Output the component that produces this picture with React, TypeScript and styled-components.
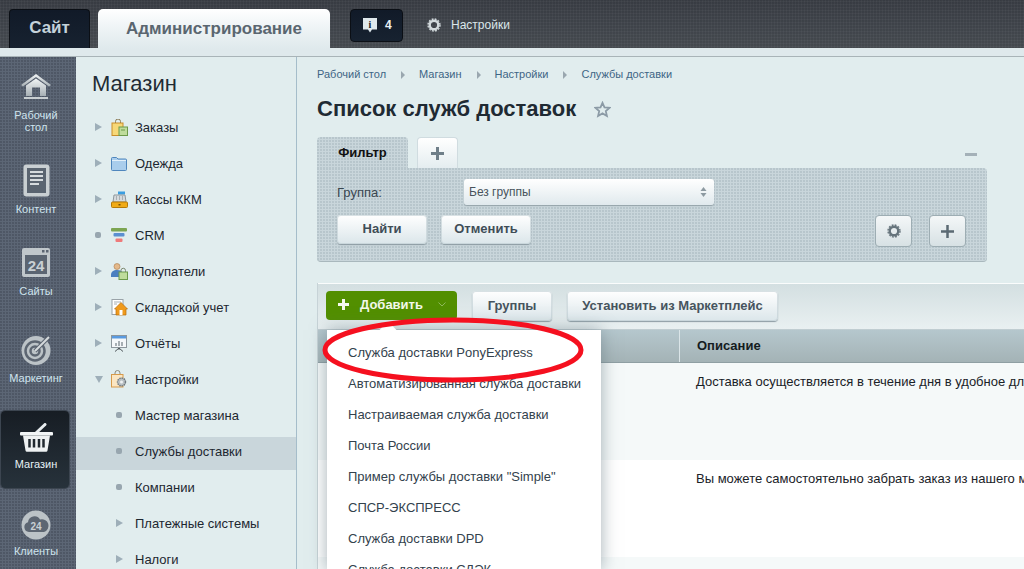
import React from "react";
import styled, { createGlobalStyle } from "styled-components";

const Global = createGlobalStyle`
  html, body { margin: 0; padding: 0; background: #e1edee; }
  body { font-family: "Liberation Sans", Arial, sans-serif; overflow: hidden; }
  * { box-sizing: border-box; }
`;

const Page = styled.div`
  width: 1024px; height: 569px; overflow: hidden; display: flex; flex-direction: column; position: relative;
`;
const TopBar = styled.header`
  height: 57px; flex: none; padding: 9px 0 0 9px; display: flex; align-items: flex-start;
  border-bottom: 1px solid #a9b4b8;
  background:
    linear-gradient(#dfe9ec, #dfe9ec) left bottom / 100% 8px no-repeat,
    repeating-linear-gradient(0deg, rgba(255,255,255,.025) 0 1px, rgba(0,0,0,.03) 1px 3px),
    repeating-linear-gradient(90deg, rgba(255,255,255,.025) 0 1px, rgba(0,0,0,.03) 1px 3px),
    linear-gradient(#3b3f46, #4b5056);
`;
const SiteTab = styled.div`
  width: 81px; height: 39px; margin-right: 8px; border-radius: 4px 4px 0 0; background: linear-gradient(#111a28, #172230);
  border: 1px solid #0b0f15; border-bottom: 0; color: #c4d2da; font-size: 17px; font-weight: bold;
  display: flex; align-items: center; justify-content: center; padding-bottom: 2px;
`;
const AdminTab = styled.div`
  width: 232px; height: 47px; border-radius: 5px 5px 0 0; background: linear-gradient(#fff, #f0f5f7 35%, #dfe9ec 85%);
  color: #5a6670; font-size: 17px; font-weight: bold; display: flex; align-items: flex-start; justify-content: center; padding-top: 10px; margin-right: 20px;
`;
const NotifyButton = styled.div`
  width: 53px; height: 33px; border-radius: 4px; background: linear-gradient(#111a28, #172230); border: 1px solid #0b0f15;
  color: #e8eff2; font-size: 12px; font-weight: bold; display: flex; align-items: center; gap: 8px; padding: 0 0 1px 12px; margin-right: 24px;
`;
const TopSettings = styled.div`
  height: 31px; display: flex; align-items: center; gap: 10px; color: #dbe6ea; font-size: 12px;
`;
const Body = styled.div`
  flex: 1; display: flex; min-height: 0;
`;
const LeftNav = styled.nav`
  width: 76px; flex: none; padding: 3px 0 0 1px; overflow: hidden; background-color: #5c6675;
  background-image: radial-gradient(circle at 1px 1px, rgba(35,42,52,.25) .7px, transparent 1px);
  background-size: 3px 3px;
`;
const NavItem = styled.div<{ $active?: boolean; $gap: number }>`
  width: 68px; height: 77px; padding-top: 9px; margin-bottom: ${p => p.$gap}px; border-radius: 4px;
  display: flex; flex-direction: column; align-items: center;
  ${p => p.$active ? "background: linear-gradient(#171d24, #27323b); box-shadow: 0 0 0 1px #3c4550;" : ""}
`;
const NavIcon = styled.div`
  width: 68px; height: 34px; flex: none; padding-left: 2px; display: flex; align-items: center; justify-content: center;
`;
const NavLabel = styled.div<{ $gap: number; $active?: boolean }>`
  margin-top: ${p => p.$gap}px; padding-left: 2px; font-size: 11px; line-height: 12px; text-align: center;
  color: ${p => p.$active ? "#e6f1f5" : "#cfe4ee"}; white-space: pre-line;
`;
const MenuPanel = styled.aside`
  width: 221px; flex: none; overflow: hidden; border-right: 1px solid #a5bdca; background: #e1edee; 
`;
const MenuTitle = styled.h2`
  margin: 15px 0 17px 16px; height: 24px; font-size: 22px; line-height: 24px; font-weight: normal; color: #1f2b34;
`;
const MenuRow = styled.div<{ $selected?: boolean }>`
  height: 33px; margin-bottom: 3px; padding: 0 0 5px 19px; display: flex; align-items: center; font-size: 13px; color: #1d2730; white-space: nowrap;
  background: ${p => p.$selected ? "#c9d6db" : "transparent"};
`;
const MarkerSlot = styled.div<{ $sub?: boolean }>`
  flex: none; width: ${p => p.$sub ? 40 : 16}px; padding-left: ${p => p.$sub ? 21 : 0}px; display: flex; align-items: center;
`;
const ArrowRight = styled.i`
  width: 0; height: 0; border-style: solid; border-width: 4px 0 4px 7px; border-color: transparent transparent transparent #9eafb9;
`;
const ArrowDown = styled.i`
  width: 0; height: 0; border-style: solid; border-width: 7px 4.5px 0 4.5px; border-color: #9eafb9 transparent transparent transparent;
`;
const Bullet = styled.i`
  width: 6px; height: 6px; border-radius: 2px; background: #98a6af;
`;
const IconSlot = styled.div`
  flex: none; width: 24px; height: 20px; display: flex; align-items: center;
`;
const Content = styled.main`
  flex: 1; min-width: 0; padding: 0 0 0 20px; background: #e1edee; overflow: hidden;
`;
const Crumbs = styled.div`
  height: 13px; margin-top: 11px; display: flex; align-items: center; font-size: 11px; line-height: 13px; color: #3e6585;
`;
const CrumbArrow = styled.i`
  width: 0; height: 0; margin: 0 14px 0 15px; border-style: solid; border-width: 4px 0 4px 4px; border-color: transparent transparent transparent #9aa7af;
`;
const TitleRow = styled.div`
  margin-top: 15px; height: 26px; display: flex; align-items: center; gap: 18px;
`;
const Title = styled.h1`
  margin: 0; font-size: 22px; line-height: 26px; font-weight: bold; color: #1f2a33;
`;
const FilterHead = styled.div`
  width: 670px; height: 31px; margin-top: 15px; display: flex; align-items: stretch; position: relative;
`;
const dots = `
  background-color: #c9d6db;
  background-image: radial-gradient(circle at 1px 1px, rgba(120,140,150,.22) .7px, transparent 1px);
  background-size: 3px 3px;
`;
const FilterTab = styled.div`
  width: 91px; border-radius: 4px 4px 0 0; ${dots}; font-size: 13px; font-weight: bold; color: #111; display: flex; align-items: center; justify-content: center; margin-right: 9px;
`;
const PlusTab = styled.div`
  width: 41px; border-radius: 4px 4px 0 0; background: linear-gradient(#fff, #e4edf0); border: 1px solid #d0dce0; border-bottom: 0;
  display: flex; align-items: center; justify-content: center;
`;
const Collapse = styled.i`
  position: absolute; right: 10px; top: 16px; width: 12px; height: 3px; background: #a4b1b8;
`;
const FilterPanel = styled.section`
  width: 670px; height: 94px; border-radius: 0 4px 4px 4px; ${dots}; border-bottom: 1px solid #a9b8bd; padding: 11px 21px 0 20px;
`;
const FieldRow = styled.div`
  height: 26px; display: flex; align-items: center; font-size: 13px; color: #3a4750;
`;
const FieldLabel = styled.label`
  width: 127px; flex: none;
`;
const SelectBox = styled.div`
  width: 250px; height: 26px; border-radius: 3px; background: linear-gradient(#fff, #e0e9ed); box-shadow: 0 1px 1px #95a4aa;
  padding: 0 7px 0 5px; display: flex; align-items: center; justify-content: space-between; font-size: 12px; color: #48535c;
`;
const FilterActions = styled.div`
  margin-top: 10px; display: flex; align-items: flex-start;
`;
const Btn = styled.button<{ $w: number }>`
  width: ${p => p.$w}px; height: 29px; padding: 0 0 2px; border: 0; border-radius: 4px; background: linear-gradient(#fff, #dbe6ea);
  box-shadow: 0 1px 1px #8d9ca3, 0 0 0 1px rgba(190,205,210,.6) inset; font: bold 13px "Liberation Sans", Arial, sans-serif; color: #3f4d57; margin-right: 14px;
`;
const Spacer = styled.div`
  flex: 1;
`;
const IconBtn = styled.button`
  width: 37px; height: 32px; padding: 0; border: 1px solid #9dadb3; border-radius: 4px; background: linear-gradient(#f4f7f8, #d7e1e4);
  display: flex; align-items: center; justify-content: center; margin-left: 17px;
`;
const Grid = styled.section`
  margin-top: 21px; width: 727px; border-left: 1px solid #c7d3d7; position: relative;
`;
const Toolbar = styled.div`
  height: 47px; padding: 7px 0 0 8px; display: flex; align-items: flex-start; border-top: 1px solid #fafcfc; border-bottom: 1px solid #c0cdd1;
  background: linear-gradient(#d3dfe1, #e9f0f1);
`;
const AddBtn = styled.div`
  width: 131px; height: 29px; margin-right: 15px; padding: 0 0 2px 12px; border-radius: 4px; background: #528f00; color: #f3f8ea; font-size: 13px; font-weight: bold;
  display: flex; align-items: center; gap: 11px;
`;
const AddChevron = styled.svg`
  margin-left: 4px;
`;
const ToolBtn = styled(Btn)`
  margin-right: 15px; height: 30px; color: #47545e;
`;
const TableHead = styled.div`
  height: 33px; display: flex; font-size: 13px; font-weight: bold; color: #141c21; border-bottom: 1px solid #8f9fa3;
  background: linear-gradient(#b5c7cd, #a4b3b6);
`;
const HeadSpacer = styled.div`
  width: 362px; flex: none; border-right: 1px solid #dbe5e8;
`;
const HeadCell = styled.div`
  padding: 0 0 2px 17px; display: flex; align-items: center;
`;
const TableRow = styled.div<{ $alt?: boolean }>`
  height: 97px; padding: 11px 0 0 378px; background: ${p => p.$alt ? "#f5f9f9" : "#fff"}; font-size: 13px; line-height: 15px; color: #1a2227; white-space: nowrap; overflow: hidden;
`;
const Dropdown = styled.div`
  position: absolute; left: 9px; top: 47px; width: 274px; height: 240px; background: #fff; box-shadow: 0 0 16px rgba(90,110,120,.55); padding: 7px 0 0 21px;
  &::before { content: ""; position: absolute; left: 55px; top: -6px; width: 12px; height: 12px; background: #fff; transform: rotate(45deg); }
`;
const DropItem = styled.div`
  height: 31px; display: flex; align-items: center; font-size: 13px; color: #33424d; white-space: nowrap; position: relative;
`;
const Annotation = styled.svg`
  position: absolute; left: 318px; top: 312px; pointer-events: none;
`;

const HomeIcon = () => (
  <svg width="30" height="28" viewBox="0 0 30 28">
    <defs><linearGradient id="g1" x1="0" y1="0" x2="0" y2="1"><stop offset="0" stopColor="#f2f5f6" /><stop offset="1" stopColor="#a6afb4" /></linearGradient></defs>
    <path d="M0 13 15 2l15 11-2 1.500L15 5 2 14.500Z" fill="url(#g1)" />
    <path d="M5 13.500 15 6.500l10 7V24H19V15.500h-8V24H5Z" fill="url(#g1)" />
    <path d="M3 25h24v2H3Z" fill="#c8ced1" />
  </svg>
);
const DocIcon = () => (
  <svg width="27" height="33" viewBox="0 0 27 33">
    <rect x="0.500" y="0.500" width="26" height="32" rx="3" fill="#c9cfd2" />
    <rect x="4" y="4" width="19" height="25" fill="#5a6470" />
    <path d="M7 8h13M7 12h13M7 16h13M7 20h9" stroke="#d6dbde" strokeWidth="2" />
  </svg>
);
const CalIcon = () => (
  <svg width="30" height="30" viewBox="0 0 30 30">
    <rect x="1" y="0" width="28" height="29" rx="2" fill="#c0c7cb" />
    <rect x="4" y="7" width="22" height="19" fill="#5b6572" />
    <rect x="21" y="2" width="2.500" height="2.500" fill="#5b6572" /><rect x="25" y="2" width="2.500" height="2.500" fill="#5b6572" />
    <text x="15" y="23" textAnchor="middle" fontFamily="Liberation Sans" fontWeight="bold" fontSize="15" fill="#c9d0d4">24</text>
  </svg>
);
const TargetIcon = () => (
  <svg width="30" height="30" viewBox="0 0 30 30">
    <circle cx="15" cy="15.500" r="14.500" fill="#bcc3c7" />
    <circle cx="14" cy="16" r="9.500" fill="none" stroke="#5d6672" strokeWidth="2.500" />
    <circle cx="14" cy="16" r="4.500" fill="none" stroke="#5d6672" strokeWidth="2.500" />
    <path d="M14 16 27 3" stroke="#5d6672" strokeWidth="4" />
    <path d="M14 16 28 2" stroke="#d5dadc" strokeWidth="2" />
  </svg>
);
const BasketIcon = () => (
  <svg width="33" height="29" viewBox="0 0 33 29">
    <path d="M16 10 25 1.500" stroke="#e9eef0" strokeWidth="3" strokeLinecap="round" />
    <rect x="0" y="9" width="33" height="3.500" rx="1" fill="#f2f5f6" />
    <path d="M3 12.500h27l-2.500 15a1.500 1.500 0 0 1-1.500 1.300H7a1.500 1.500 0 0 1-1.500-1.300Z" fill="#eef1f2" />
    <path d="M9.500 16v8.500M14 16v8.500M19 16v8.500M23.500 16v8.500" stroke="#20282f" strokeWidth="2.500" />
  </svg>
);
const CloudIcon = () => (
  <svg width="30" height="30" viewBox="0 0 30 30">
    <circle cx="15" cy="15" r="14.500" fill="#bcc3c7" />
    <path d="M8 22a5 5 0 0 1-1-9.800A6.500 6.500 0 0 1 19 9.500 5.500 5.500 0 0 1 23 22Z" fill="#5d6672" />
    <text x="15" y="19.500" textAnchor="middle" fontFamily="Liberation Sans" fontWeight="bold" fontSize="10" fill="#c9d0d4">24</text>
  </svg>
);

const BagIcon = () => (
  <svg width="17" height="17" viewBox="0 0 17 17">
    <path d="M4.500 4V2.500a2.500 2.500 0 0 1 5 0V4" fill="none" stroke="#8a7a55" />
    <rect x="1" y="4" width="11" height="12.500" fill="#f7d878" stroke="#c98d2a" />
    <rect x="8" y="8" width="8.500" height="8.500" fill="#bfdc9c" stroke="#6c9a4a" />
    <path d="M10 11h4" stroke="#6c9a4a" />
  </svg>
);
const FolderIcon = () => (
  <svg width="16" height="15" viewBox="0 0 16 15">
    <path d="M.5 2.500a1 1 0 0 1 1-1h4l1.500 1.500h7.500a1 1 0 0 1 1 1v9.500a1 1 0 0 1-1 1h-13a1 1 0 0 1-1-1Z" fill="#a9cdec" stroke="#4f86bd" />
    <path d="M1 4.500h14" stroke="#e3f0fa" />
  </svg>
);
const CashIcon = () => (
  <svg width="17" height="17" viewBox="0 0 17 17">
    <rect x="7" y="0.500" width="7" height="3" fill="#3b9ee0" />
    <path d="M3 4h11l1 7H2Z" fill="#d6dadc" stroke="#8f979c" />
    <path d="M5 6h1M8 6h1M11 6h1M5 8h1M8 8h1M11 8h1" stroke="#7c858a" />
    <rect x="0.500" y="11" width="16" height="5.500" rx="1" fill="#f0ab17" stroke="#b57a08" />
    <rect x="7.500" y="13" width="2" height="1.500" fill="#7a5205" />
  </svg>
);
const FunnelIcon = () => (
  <svg width="16" height="15" viewBox="0 0 16 15">
    <rect x="0" y="0" width="16" height="3.500" rx="1" fill="#7ca552" />
    <rect x="2.500" y="5" width="11" height="3.500" rx="1" fill="#5b8fd0" />
    <rect x="4.500" y="10.500" width="7" height="3.500" rx="1" fill="#ef7a7a" />
  </svg>
);
const UsersIcon = () => (
  <svg width="17" height="17" viewBox="0 0 17 17">
    <circle cx="6" cy="3.500" r="3" fill="#e4b98b" stroke="#a9794a" strokeWidth=".6" />
    <path d="M0 12c0-3.500 2.500-5 6-5s5 1 5.500 3L8 14H0Z" fill="#4a7fc0" />
    <rect x="8" y="9" width="8.500" height="7.500" fill="#bfdc9c" stroke="#6c9a4a" />
    <path d="M10 9V7.500a2.200 2.200 0 0 1 4.500 0V9" fill="none" stroke="#7d8a72" />
  </svg>
);
const StockIcon = () => (
  <svg width="17" height="17" viewBox="0 0 17 17">
    <rect x="1" y="0.500" width="11" height="15" fill="#fff" stroke="#9aa3a8" />
    <path d="M3 3h7M3 5h3" stroke="#a7afb4" />
    <path d="M3.500 10 10 3.500 16.500 10H15v6H5v-6Z" fill="#ef9a1c" stroke="#b96f08" strokeWidth=".7" />
    <rect x="8.500" y="11" width="3" height="5" fill="#fff" />
  </svg>
);
const ReportIcon = () => (
  <svg width="16" height="17" viewBox="0 0 16 17">
    <rect x="0.500" y="0.500" width="15" height="12" fill="#f5f8fa" stroke="#8d979d" />
    <rect x="1" y="1" width="14" height="2.500" fill="#5a9be0" />
    <path d="M5 11V8M8 11V6M11 11V7" stroke="#8d979d" strokeWidth="1.500" />
    <path d="M8 13v2M8 13 4 16.500M8 13l4 3.500" stroke="#4f565b" />
  </svg>
);
const BagGearIcon = () => (
  <svg width="16" height="18" viewBox="0 0 16 18">
    <path d="M4 4.500V3a2.500 2.500 0 0 1 5 0v1.500" fill="none" stroke="#8f8a7a" />
    <rect x="0.500" y="4.500" width="11.500" height="12.500" fill="#fbe6c2" stroke="#d69a4a" />
    <circle cx="10.500" cy="12" r="4" fill="#b8bfc3" stroke="#6e777c" strokeWidth="1.400" strokeDasharray="1.500 .8" />
    <circle cx="10.500" cy="12" r="1.500" fill="#eef1f2" />
  </svg>
);
const GearIcon = ({ size, color }: { size: number; color: string }) => (
  <svg width={size} height={size} viewBox="0 0 14 14">
    <circle cx="7" cy="7" r="4.300" fill="none" stroke={color} strokeWidth="2.400" />
    <circle cx="7" cy="7" r="6" fill="none" stroke={color} strokeWidth="1.400" strokeDasharray="1.900 1.240" />
  </svg>
);
const PlusIcon = ({ size, color, weight }: { size: number; color: string; weight: number }) => (
  <svg width={size} height={size} viewBox={`0 0 ${size} ${size}`}>
    <path d={`M${size / 2} 0V${size}M0 ${size / 2}H${size}`} stroke={color} strokeWidth={weight} />
  </svg>
);
const InfoIcon = () => (
  <svg width="14" height="15" viewBox="0 0 14 15">
    <path d="M0 0h14v11.500H9L7 14.500 5 11.500H0Z" fill="#dfe8ec" />
    <text x="7" y="9.500" textAnchor="middle" fontFamily="Liberation Serif" fontWeight="bold" fontSize="10" fill="#141c28">i</text>
  </svg>
);
const StarIcon = () => (
  <svg width="17" height="17" viewBox="0 0 17 17">
    <path d="M8.500 1.800 10.500 6.300 15.500 6.800 11.800 10.100 12.900 15 8.500 12.400 4.100 15 5.200 10.100 1.500 6.800 6.500 6.300Z" fill="none" stroke="#8c9ba6" strokeWidth="1.800" />
  </svg>
);
const SpinIcon = () => (
  <svg width="7" height="12" viewBox="0 0 7 12">
    <path d="M3.500 1 6.500 5H.5ZM3.500 11 .5 7h6Z" fill="#8d9aa1" />
  </svg>
);

const navItems = [
  { label: "Рабочий\nстол", icon: <HomeIcon />, gap: 17, lg: 6 },
  { label: "Контент", icon: <DocIcon />, gap: 6, lg: 6 },
  { label: "Сайты", icon: <CalIcon />, gap: 10, lg: 5 },
  { label: "Маркетинг", icon: <TargetIcon />, gap: 10, lg: 5 },
  { label: "Магазин", icon: <BasketIcon />, gap: 11, lg: 4, active: true },
  { label: "Клиенты", icon: <CloudIcon />, gap: 0, lg: 3 },
];

type Row = { label: string; icon?: React.ReactNode; mark: "right" | "down" | "dot"; sub?: boolean; selected?: boolean };
const menuRows: Row[] = [
  { label: "Заказы", icon: <BagIcon />, mark: "right" },
  { label: "Одежда", icon: <FolderIcon />, mark: "right" },
  { label: "Кассы ККМ", icon: <CashIcon />, mark: "right" },
  { label: "CRM", icon: <FunnelIcon />, mark: "dot" },
  { label: "Покупатели", icon: <UsersIcon />, mark: "right" },
  { label: "Складской учет", icon: <StockIcon />, mark: "right" },
  { label: "Отчёты", icon: <ReportIcon />, mark: "right" },
  { label: "Настройки", icon: <BagGearIcon />, mark: "down" },
  { label: "Мастер магазина", mark: "dot", sub: true },
  { label: "Службы доставки", mark: "dot", sub: true, selected: true },
  { label: "Компании", mark: "dot", sub: true },
  { label: "Платежные системы", mark: "right", sub: true },
  { label: "Налоги", mark: "right", sub: true },
];
const crumbs = ["Рабочий стол", "Магазин", "Настройки", "Службы доставки"];
const services = [
  "Служба доставки PonyExpress",
  "Автоматизированная служба доставки",
  "Настраиваемая служба доставки",
  "Почта России",
  'Пример службы доставки "Simple"',
  "СПСР-ЭКСПРЕСС",
  "Служба доставки DPD",
  "Служба доставки СДЭК",
];

export default function App() {
  return (
    <Page>
      <Global />
      <TopBar>
        <SiteTab>Сайт</SiteTab>
        <AdminTab>Администрирование</AdminTab>
        <NotifyButton><InfoIcon />4</NotifyButton>
        <TopSettings><GearIcon size={14} color="#d3dadd" />Настройки</TopSettings>
      </TopBar>
      <Body>
        <LeftNav>
          {navItems.map(n => (
            <NavItem key={n.label} $active={n.active} $gap={n.gap}>
              <NavIcon>{n.icon}</NavIcon>
              <NavLabel $gap={n.lg} $active={n.active}>{n.label}</NavLabel>
            </NavItem>
          ))}
        </LeftNav>
        <MenuPanel>
          <MenuTitle>Магазин</MenuTitle>
          {menuRows.map(r => (
            <MenuRow key={r.label} $selected={r.selected}>
              <MarkerSlot $sub={r.sub}>
                {r.mark === "right" && <ArrowRight />}
                {r.mark === "down" && <ArrowDown />}
                {r.mark === "dot" && <Bullet />}
              </MarkerSlot>
              {!r.sub && <IconSlot>{r.icon}</IconSlot>}
              {r.label}
            </MenuRow>
          ))}
        </MenuPanel>
        <Content>
          <Crumbs>
            {crumbs.map((c, i) => (
              <React.Fragment key={c}>
                {i > 0 && <CrumbArrow />}
                {c}
              </React.Fragment>
            ))}
          </Crumbs>
          <TitleRow>
            <Title>Список служб доставок</Title>
            <StarIcon />
          </TitleRow>
          <FilterHead>
            <FilterTab>Фильтр</FilterTab>
            <PlusTab><PlusIcon size={13} color="#6f7f89" weight={3} /></PlusTab>
            <Collapse />
          </FilterHead>
          <FilterPanel>
            <FieldRow>
              <FieldLabel>Группа:</FieldLabel>
              <SelectBox>Без группы<SpinIcon /></SelectBox>
            </FieldRow>
            <FilterActions>
              <Btn $w={90}>Найти</Btn>
              <Btn $w={90}>Отменить</Btn>
              <Spacer />
              <IconBtn><GearIcon size={14} color="#66747c" /></IconBtn>
              <IconBtn><PlusIcon size={13} color="#5b6a73" weight={2.500} /></IconBtn>
            </FilterActions>
          </FilterPanel>
          <Grid>
            <Toolbar>
              <AddBtn>
                <PlusIcon size={11} color="#f4f8ee" weight={3} />
                Добавить
                <AddChevron width="8" height="5" viewBox="0 0 8 5"><path d="M.5.500 4 4 7.500.500" fill="none" stroke="#8db85a" /></AddChevron>
              </AddBtn>
              <ToolBtn $w={80}>Группы</ToolBtn>
              <ToolBtn $w={211}>Установить из Маркетплейс</ToolBtn>
            </Toolbar>
            <TableHead>
              <HeadSpacer />
              <HeadCell>Описание</HeadCell>
            </TableHead>
            <TableRow $alt>Доставка осуществляется в течение дня в удобное для вас время.</TableRow>
            <TableRow>Вы можете самостоятельно забрать заказ из нашего магазина.</TableRow>
            <TableRow $alt />
            <Dropdown>
              {services.map(s => <DropItem key={s}>{s}</DropItem>)}
            </Dropdown>
          </Grid>
        </Content>
      </Body>
      <Annotation width="272" height="76" viewBox="0 0 272 76">
        <ellipse cx="135" cy="38" rx="128" ry="30" fill="none" stroke="#f5101f" strokeWidth="5" />
      </Annotation>
    </Page>
  );
}
